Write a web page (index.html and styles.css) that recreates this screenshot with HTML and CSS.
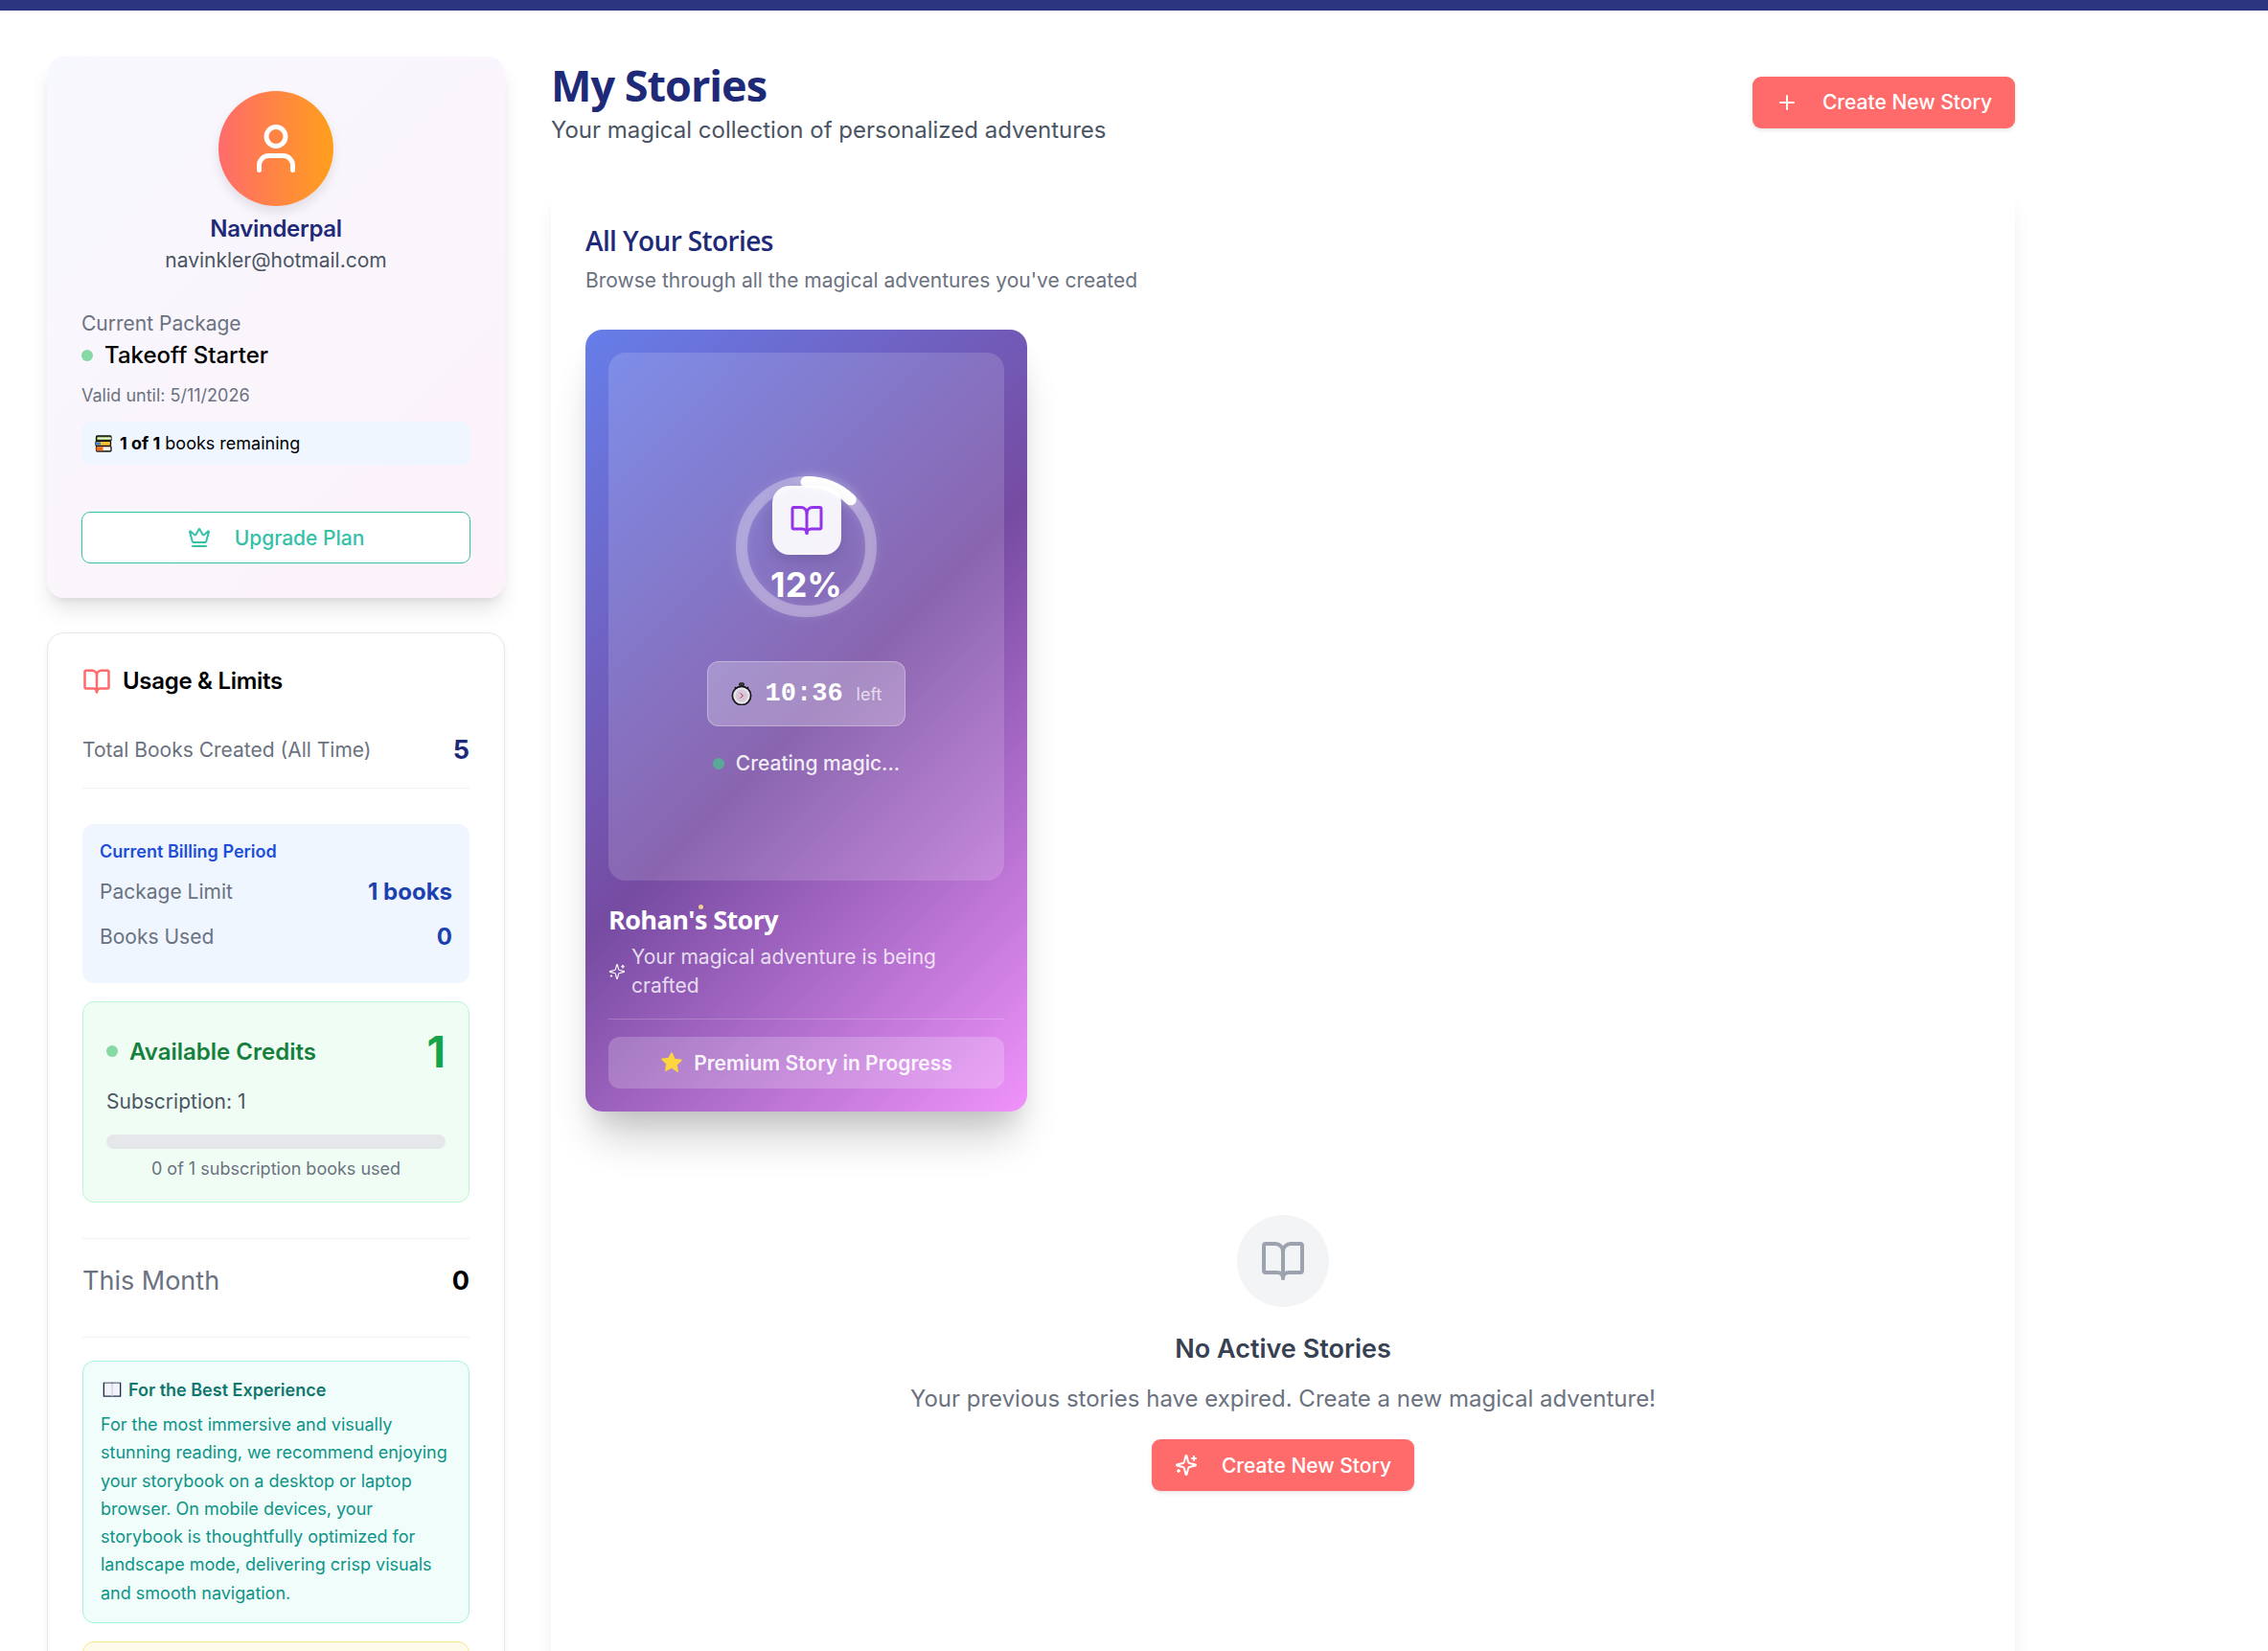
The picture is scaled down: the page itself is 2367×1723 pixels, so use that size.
FILE: index.html
```html
<!DOCTYPE html>
<html lang="en">
<head>
<meta charset="utf-8">
<title>My Stories</title>
<link rel="stylesheet" href="styles.css">
</head>
<body>
<svg class="defs" width="0" height="0" aria-hidden="true">
  <symbol id="book" viewBox="0 0 24 24"><path d="M12 7v14"/><path d="M3 18a1 1 0 0 1-1-1V4a1 1 0 0 1 1-1h5a4 4 0 0 1 4 4 4 4 0 0 1 4-4h5a1 1 0 0 1 1 1v13a1 1 0 0 1-1 1h-6a3 3 0 0 0-3 3 3 3 0 0 0-3-3z"/></symbol>
  <symbol id="sparkles" viewBox="0 0 24 24"><path d="M9.937 15.5A2 2 0 0 0 8.5 14.063l-6.135-1.582a.5.5 0 0 1 0-.962L8.5 9.936A2 2 0 0 0 9.937 8.5l1.582-6.135a.5.5 0 0 1 .963 0L14.063 8.5A2 2 0 0 0 15.5 9.937l6.135 1.581a.5.5 0 0 1 0 .964L15.5 14.063a2 2 0 0 0-1.437 1.437l-1.582 6.135a.5.5 0 0 1-.963 0z"/><path d="M20 3v4"/><path d="M22 5h-4"/><path d="M4 17v2"/><path d="M5 18H3"/></symbol>
</svg>
<div class="topbar"></div>
<div class="page">
  <aside class="sidebar">
    <section class="profile">
      <div class="avatar">
        <svg class="icon icon-user" viewBox="0 0 24 24"><circle cx="12" cy="7" r="4"/><path d="M19 21v-2a4 4 0 0 0-4-4H9a4 4 0 0 0-4 4v2"/></svg>
      </div>
      <div class="name">Navinderpal</div>
      <div class="email">navinkler@hotmail.com</div>
      <div class="pkg-label">Current Package</div>
      <div class="pkg-name"><span class="dot"></span>Takeoff Starter</div>
      <div class="valid">Valid until: 5/11/2026</div>
      <div class="remaining">
        <svg class="emoji-books" viewBox="0 0 18 18"><rect x="1.5" y="1" width="15.5" height="5" rx="1" fill="#7cb342" stroke="#111" stroke-width="1.3"/><rect x="3" y="2.6" width="14" height="1.8" fill="#f4f1e4"/><rect x="1" y="6.3" width="15.5" height="5" rx="1" fill="#fbc02d" stroke="#111" stroke-width="1.3"/><rect x="1" y="7.4" width="5" height="3" fill="#3f7fd0"/><rect x="1.5" y="11.7" width="15.5" height="5.3" rx="1" fill="#f4f1e4" stroke="#111" stroke-width="1.3"/><rect x="1.5" y="12.4" width="7" height="4" fill="#ef6c1a"/></svg>
        <span><b>1 of 1</b> books remaining</span>
      </div>
      <a class="upgrade">
        <svg class="icon icon-crown" viewBox="0 0 24 24"><path d="M11.562 3.266a.5.5 0 0 1 .876 0L15.39 8.87a1 1 0 0 0 1.516.294L21.183 5.5a.5.5 0 0 1 .798.519l-2.834 10.246a1 1 0 0 1-.956.734H5.81a1 1 0 0 1-.957-.734L2.02 6.02a.5.5 0 0 1 .798-.519l4.276 3.664a1 1 0 0 0 1.516-.294z"/><path d="M5 21h14"/></svg>
        Upgrade Plan
      </a>
    </section>

    <section class="usage">
      <h3 class="usage-title"><svg class="icon icon-usage"><use href="#book"/></svg>Usage &amp; Limits</h3>
      <div class="total-row"><span>Total Books Created (All Time)</span><b>5</b></div>
      <div class="billing">
        <div class="billing-title">Current Billing Period</div>
        <div class="billing-row"><span>Package Limit</span><b>1 books</b></div>
        <div class="billing-row"><span>Books Used</span><b>0</b></div>
      </div>
      <div class="credits">
        <div class="credits-head">
          <span class="credits-title"><span class="dot dot-credits"></span>Available Credits</span>
          <b class="credits-num">1</b>
        </div>
        <div class="credits-sub">Subscription: 1</div>
        <div class="track"></div>
        <div class="credits-note">0 of 1 subscription books used</div>
      </div>
      <div class="month-row"><span>This Month</span><b>0</b></div>
      <div class="tip">
        <div class="tip-title">
          <svg class="emoji-open" viewBox="0 0 20 17"><rect x="0.7" y="0.7" width="18.6" height="15" fill="#1d2747"/><path d="M2 1.5h7.5l.5 1 .5-1H18v13h-7.5l-.5 1-.5-1H2z" fill="#f1f3f8"/><path d="M10 2.5v12" stroke="#b8bfd2" stroke-width=".8"/></svg>
          For the Best Experience
        </div>
        <p class="tip-text">For the most immersive and visually stunning reading, we recommend enjoying your storybook on a desktop or laptop browser. On mobile devices, your storybook is thoughtfully optimized for landscape mode, delivering crisp visuals and smooth navigation.</p>
      </div>
      <div class="notice"></div>
    </section>
  </aside>

  <main class="main">
    <header class="main-head">
      <div>
        <h1 class="title">My Stories</h1>
        <p class="subtitle">Your magical collection of personalized adventures</p>
      </div>
      <a class="btn">
        <svg class="icon icon-btn" viewBox="0 0 24 24"><path d="M5 12h14"/><path d="M12 5v14"/></svg>
        Create New Story
      </a>
    </header>

    <section class="panel">
      <h2 class="panel-title">All Your Stories</h2>
      <p class="panel-sub">Browse through all the magical adventures you've created</p>

      <article class="story">
        <div class="story-cover">
          <div class="ring">
            <svg class="ring-svg" viewBox="0 0 147 147">
              <circle class="ring-bg" cx="73.5" cy="73.5" r="67.5"/>
              <circle class="ring-fg" cx="73.5" cy="73.5" r="67.5" transform="rotate(-90 73.5 73.5)"/>
            </svg>
            <div class="ring-icon"><svg class="icon icon-ring"><use href="#book"/></svg></div>
            <div class="ring-pct">12%</div>
          </div>
          <div class="timer">
            <svg class="emoji-watch" viewBox="0 0 22 24"><rect x="8.5" y="0.8" width="5" height="3" rx="1" fill="#3c3a3f" stroke="#111" stroke-width=".8"/><path d="M4 5l2 2M18 5l-2 2" stroke="#111" stroke-width="1.6"/><circle cx="11" cy="14" r="9.6" fill="#e9e7ec" stroke="#17151c" stroke-width="1.7"/><circle cx="11" cy="14" r="6.4" fill="#d9c7d9"/><path d="M9.5 11.5l3 2.5-3 2.5" fill="none" stroke="#b03040" stroke-width="1"/></svg>
            <span class="timer-time">10:36</span>
            <span class="timer-left">left</span>
          </div>
          <div class="creating"><span class="creating-dot"></span>Creating magic...</div>
        </div>
        <h3 class="story-title">Rohan's Story<span class="particle"></span></h3>
        <div class="story-desc">
          <svg class="icon icon-desc"><use href="#sparkles"/></svg>
          <span>Your magical adventure is being crafted</span>
        </div>
        <div class="premium">
          <svg class="emoji-star" viewBox="0 0 24 24"><path d="M12 2.2l3 6.3 6.9.9-5 4.8 1.3 6.9L12 16.9 5.8 20.1l1.3-6.9-5-4.8 6.9-.9z" fill="#fcd53f" stroke="#fcd53f" stroke-width="1.6" stroke-linejoin="round"/></svg>
          Premium Story in Progress
        </div>
      </article>

      <div class="empty">
        <div class="empty-circle"><svg class="icon icon-empty"><use href="#book"/></svg></div>
        <h3 class="empty-title">No Active Stories</h3>
        <p class="empty-text">Your previous stories have expired. Create a new magical adventure!</p>
        <a class="btn"><svg class="icon icon-btn"><use href="#sparkles"/></svg>Create New Story</a>
      </div>
    </section>
  </main>
</div>
</body>
</html>
```
FILE: styles.css
```css
* { box-sizing: border-box; }
html, body { margin: 0; height: 100%; overflow: hidden; }
body { background: #fff; font-family: Inter, "Liberation Sans", sans-serif; color: #000; }
h1, h2, h3, p { margin: 0; }
.defs { position: absolute; }
.icon { fill: none; stroke: currentColor; stroke-width: 2; stroke-linecap: round; stroke-linejoin: round; flex: none; display: block; }

.topbar { height: 11px; background: #2c3680; }
.page { display: flex; gap: 48px; height: calc(100vh - 11px); padding: 48px 264px 0 49px; overflow: hidden; }
.sidebar { width: 478px; flex: none; display: flex; flex-direction: column; gap: 36px; }
.main { flex: 1; min-width: 0; }

/* profile */
.profile { padding: 36px; border-radius: 18px; background: linear-gradient(135deg, #f8f8ff, #fdf2f9); box-shadow: 0 15px 22px -3px rgba(0,0,0,.1), 0 6px 9px -4px rgba(0,0,0,.08); }
.avatar { width: 120px; height: 120px; margin: 0 auto; border-radius: 50%; background: linear-gradient(90deg, #ff6b6b, #ff9f1c); box-shadow: 0 6px 12px rgba(0,0,0,.1); display: flex; align-items: center; justify-content: center; color: #fff; }
.icon-user { width: 60px; height: 60px; stroke-width: 2; }
.name { margin-top: 6px; font-size: 24px; line-height: 36px; font-weight: 600; color: #1e2a78; text-align: center; letter-spacing: -.3px; }
.email { font-size: 21px; line-height: 30px; color: #4b5563; text-align: center; }
.pkg-label { margin-top: 36px; font-size: 21px; line-height: 30px; color: #6b7280; }
.pkg-name { display: flex; align-items: center; font-size: 24px; line-height: 36px; font-weight: 500; color: #000; }
.dot { width: 12px; height: 12px; border-radius: 50%; background: #86d9a5; margin-right: 12px; flex: none; }
.valid { margin-top: 10px; font-size: 18px; line-height: 27px; color: #6b7280; }
.remaining { margin-top: 14px; height: 45px; padding: 0 14px; display: flex; align-items: center; gap: 8px; font-size: 18px; background: #eff6ff; border-radius: 9px; }
.remaining b { font-weight: 700; }
.emoji-books { width: 18px; height: 18px; flex: none; }
.upgrade { margin-top: 49px; height: 54px; display: flex; align-items: center; justify-content: center; gap: 25px; background: #fff; border: 1.5px solid #35c0a8; border-radius: 9px; color: #35c0a8; font-size: 21px; font-weight: 500; }
.icon-crown { width: 24px; height: 24px; }

/* usage */
.usage { padding: 32px 36px 36px; border: 1.5px solid #e5e7eb; border-radius: 18px; background: #fff; box-shadow: 0 2px 6px rgba(0,0,0,.05); }
.usage-title { display: flex; align-items: center; gap: 12px; font-size: 24px; line-height: 36px; font-weight: 600; letter-spacing: -.3px; }
.icon-usage { width: 30px; height: 30px; color: #ff6b6b; }
.total-row { margin-top: 36px; padding-bottom: 21px; border-bottom: 1.5px solid #f0f1f3; display: flex; justify-content: space-between; align-items: center; font-size: 21px; line-height: 36px; color: #6b7280; }
.total-row b { font-size: 27px; color: #1e2a78; }
.billing { margin-top: 37px; padding: 15px 18px 30px; background: #eff6ff; border-radius: 12px; }
.billing-title { font-size: 18px; line-height: 27px; font-weight: 600; color: #1d4ed8; margin-bottom: 11px; }
.billing-row { display: flex; justify-content: space-between; align-items: center; font-size: 21px; line-height: 36px; color: #6b7280; }
.billing-row + .billing-row { margin-top: 11px; }
.billing-row b { font-size: 24px; color: #1d40b0; }
.credits { margin-top: 19px; padding: 24px 24px 21px; border: 1.5px solid #bbf7d0; border-radius: 12px; background: #f0fdf4; }
.credits-head { display: flex; justify-content: space-between; align-items: center; height: 54px; }
.credits-title { display: flex; align-items: center; font-size: 24px; font-weight: 600; color: #15803d; }
.dot-credits { margin-right: 12px; }
.credits-num { font-size: 45px; font-weight: 700; color: #16a34a; }
.credits-sub { margin-top: 11px; font-size: 21px; line-height: 30px; color: #4b5563; }
.track { margin-top: 19px; height: 15px; background: #e5e7eb; border-radius: 8px; }
.credits-note { margin-top: 7px; font-size: 18px; line-height: 27px; color: #6b7280; text-align: center; }
.month-row { margin-top: 37px; padding: 24px 0 38px; border-top: 1.5px solid #f0f1f3; border-bottom: 1.5px solid #f0f1f3; display: flex; justify-content: space-between; align-items: center; font-size: 27px; line-height: 40px; color: #6b7280; }
.month-row b { color: #000; }
.tip { margin-top: 24px; padding: 16px 18px; border: 1.5px solid #a7f0e4; border-radius: 12px; background: #f0fdfa; }
.tip-title { display: flex; align-items: center; gap: 7px; font-size: 18px; line-height: 27px; font-weight: 600; color: #0f766e; padding-left: 2px; }
.emoji-open { width: 20px; height: 17px; flex: none; }
.tip-text { margin-top: 8px; font-size: 18px; line-height: 29.25px; color: #0d9488; }
.notice { margin-top: 19px; height: 120px; border: 1.5px solid #fde68a; border-radius: 12px; background: #fffbeb; }

/* main */
.main-head { display: flex; justify-content: space-between; align-items: center; }
.title { font-family: "Open Sans", sans-serif; font-size: 45px; line-height: 60px; font-weight: 700; color: #1e2a78; letter-spacing: -1px; }
.subtitle { font-size: 24px; line-height: 36px; color: #4b5563; margin-top: -1px; }
.btn { display: inline-flex; align-items: center; gap: 25px; height: 54px; padding: 0 24px; background: #ff6b6b; border-radius: 9px; color: #fff; font-size: 21px; font-weight: 500; box-shadow: 0 2px 4px rgba(0,0,0,.1); }
.icon-btn { width: 24px; height: 24px; }

.panel { margin-top: 43px; height: 1700px; padding: 36px; background: #fff; border-radius: 18px; box-shadow: 0 15px 22px -3px rgba(0,0,0,.07), 0 6px 9px -4px rgba(0,0,0,.05); }
.panel-title { font-family: "Open Sans", sans-serif; font-size: 28px; line-height: 36px; font-weight: 600; color: #1e2a78; letter-spacing: -.6px; }
.panel-sub { margin-top: 9px; font-size: 21px; line-height: 30px; color: #6b7280; }

.story { position: relative; margin-top: 36px; width: 461px; height: 816px; padding: 24px; border-radius: 18px; background: linear-gradient(135deg, #667eea 0%, #764ba2 50%, #f093fb 100%); box-shadow: 0 37px 45px -12px rgba(0,0,0,.2), 0 15px 22px -6px rgba(0,0,0,.08); color: #fff; }
.story-cover { height: 551px; padding-top: 129px; border-radius: 18px; background: rgba(255,255,255,.15); display: flex; flex-direction: column; align-items: center; }
.ring { position: relative; width: 147px; height: 147px; padding-top: 10px; display: flex; flex-direction: column; align-items: center; }
.ring-svg { position: absolute; inset: 0; width: 147px; height: 147px; fill: none; stroke-width: 12; filter: drop-shadow(0 0 6px rgba(255,255,255,.4)); overflow: visible; }
.ring-bg { stroke: rgba(255,255,255,.3); }
.ring-fg { stroke: #fff; stroke-linecap: round; stroke-dasharray: 50.9 424.1; }
.ring-icon { position: relative; width: 72px; height: 72px; border-radius: 18px; background: rgba(255,255,255,.92); box-shadow: 0 6px 15px rgba(0,0,0,.12); display: flex; align-items: center; justify-content: center; color: #9333ea; }
.icon-ring { width: 36px; height: 36px; }
.ring-pct { position: relative; margin-top: 9px; font-size: 36px; line-height: 44px; font-weight: 700; color: #fff; }
.timer { margin-top: 46px; width: 207px; height: 68px; display: flex; align-items: center; justify-content: center; border-radius: 12px; background: rgba(255,255,255,.25); border: 1.5px solid rgba(255,255,255,.3); }
.emoji-watch { width: 22px; height: 24px; flex: none; margin-right: 14px; }
.timer-time { font-family: "Liberation Mono", monospace; font-size: 27px; font-weight: 700; margin-right: 14px; }
.timer-left { font-size: 18px; color: rgba(255,255,255,.7); }
.creating { margin-top: 24px; display: flex; align-items: center; font-size: 21px; line-height: 30px; font-weight: 500; color: rgba(255,255,255,.9); }
.creating-dot { width: 12px; height: 12px; border-radius: 50%; background: #5aa898; margin-right: 12px; }
.story-title { position: relative; margin-top: 23px; font-family: "Open Sans", sans-serif; font-size: 27px; line-height: 36px; font-weight: 700; letter-spacing: -.6px; }
.particle { position: absolute; left: 94px; top: 2px; width: 5px; height: 5px; border-radius: 50%; background: #f0d08c; }
.story-desc { margin-top: 6px; padding-bottom: 19px; border-bottom: 1px solid rgba(255,255,255,.2); display: flex; align-items: center; gap: 6px; font-size: 21px; line-height: 30px; color: rgba(255,255,255,.8); }
.icon-desc { width: 18px; height: 18px; stroke-width: 1.5; color: #fff; }
.premium { margin-top: 18px; height: 54px; display: flex; align-items: center; justify-content: center; gap: 11px; border-radius: 12px; background: rgba(255,255,255,.2); font-size: 21px; font-weight: 600; color: rgba(255,255,255,.92); }
.emoji-star { width: 24px; height: 24px; flex: none; }

.empty { margin-top: 108px; display: flex; flex-direction: column; align-items: center; }
.empty-circle { width: 96px; height: 96px; border-radius: 50%; background: #f3f4f6; display: flex; align-items: center; justify-content: center; color: #9ca3af; }
.icon-empty { width: 48px; height: 48px; }
.empty-title { margin-top: 24px; font-size: 27px; line-height: 40px; font-weight: 600; color: #374151; }
.empty-text { margin-top: 14px; font-size: 24px; line-height: 36px; color: #6b7280; }
.empty .btn { margin-top: 24px; }
```
